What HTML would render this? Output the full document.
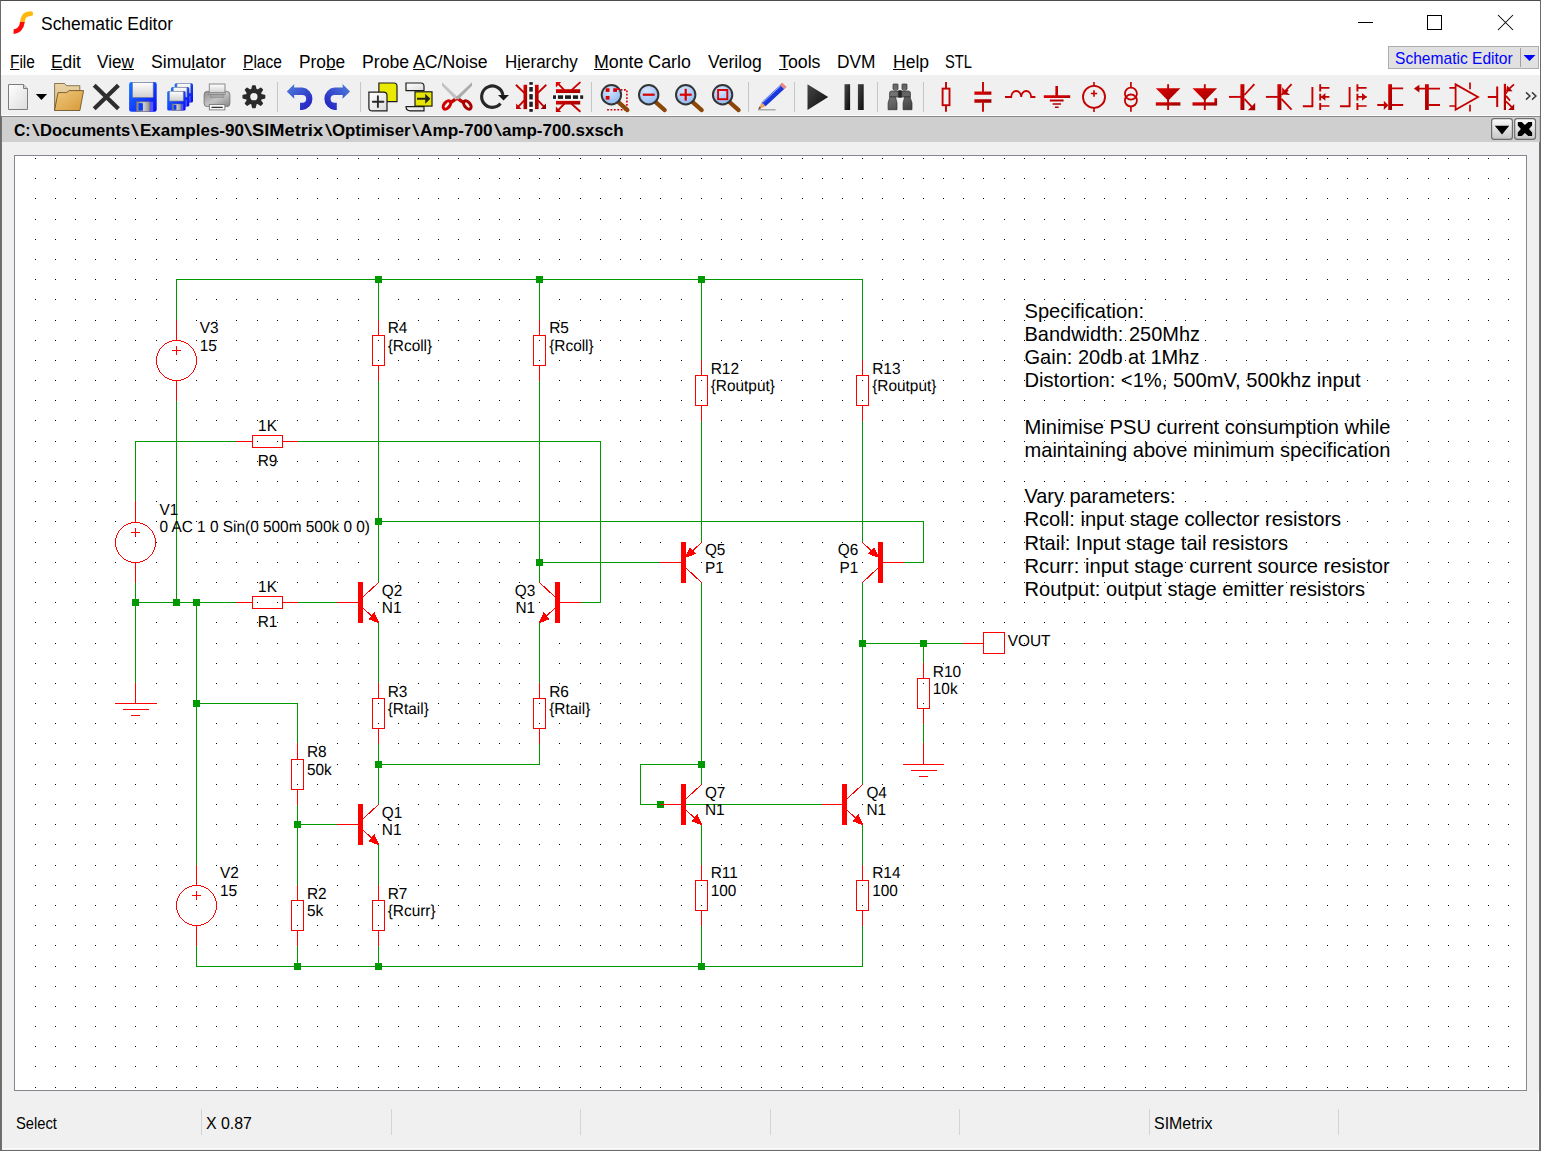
<!DOCTYPE html>
<html><head><meta charset="utf-8"><title>Schematic Editor</title>
<style>
html,body{margin:0;padding:0}
body{width:1541px;height:1151px;position:relative;overflow:hidden;background:#f0f0f0;font-family:"Liberation Sans",sans-serif;color:#000}
.t{position:absolute;white-space:nowrap;transform-origin:0 0;display:block}
.t u{text-decoration-thickness:1px;text-underline-offset:1px}
#top{position:absolute;left:0;top:0;width:1541px;height:75px;background:#fff}
#cv{position:absolute;left:14px;top:155px;width:1511px;height:934px;background:#fff;border:1px solid #828790}
#frame{position:absolute;left:0;top:0;width:1539px;height:1149px;border:1px solid #6b6b6b;border-top-color:#4c4c4c}
#inner{position:absolute;left:1px;top:116px;width:1538px;height:1033px;border:1px solid #707070;border-top-color:#8a8a8a;border-right:none}
#innr{position:absolute;left:1539px;top:142px;width:1px;height:1008px;background:#707070}
#innr2{position:absolute;left:1539px;top:117px;width:1px;height:25px;background:#b8b8b8}
svg text{font-family:"Liberation Sans",sans-serif;font-size:16.02px;fill:#000}
svg text.l{text-rendering:geometricPrecision}
</style></head><body>
<div id="top"></div>
<div id="cv"></div>
<span class="t" style="left:40.6px;top:14.1px;font-size:17.6px;line-height:20.22px;transform:scaleX(0.9922);">Schematic Editor</span>
<span class="t" style="left:9.6px;top:51.9px;font-size:17.6px;line-height:20.22px;transform:scaleX(0.8780);"><u>F</u>ile</span>
<span class="t" style="left:51.1px;top:51.9px;font-size:17.6px;line-height:20.22px;transform:scaleX(0.9859);"><u>E</u>dit</span>
<span class="t" style="left:97.3px;top:51.9px;font-size:17.6px;line-height:20.22px;transform:scaleX(0.9754);">Vie<u>w</u></span>
<span class="t" style="left:150.5px;top:51.9px;font-size:17.6px;line-height:20.22px;transform:scaleX(1.0062);">Simu<u>l</u>ator</span>
<span class="t" style="left:242.7px;top:51.9px;font-size:17.6px;line-height:20.22px;transform:scaleX(0.8835);"><u>P</u>lace</span>
<span class="t" style="left:298.5px;top:51.9px;font-size:17.6px;line-height:20.22px;transform:scaleX(0.9837);">Pro<u>b</u>e</span>
<span class="t" style="left:361.6px;top:51.9px;font-size:17.6px;line-height:20.22px;transform:scaleX(1.0030);">Probe <u>A</u>C/Noise</span>
<span class="t" style="left:505.1px;top:51.9px;font-size:17.6px;line-height:20.22px;transform:scaleX(0.9653);">H<u>i</u>erarchy</span>
<span class="t" style="left:594.1px;top:51.9px;font-size:17.6px;line-height:20.22px;transform:scaleX(1.0108);"><u>M</u>onte Carlo</span>
<span class="t" style="left:708.4px;top:51.9px;font-size:17.6px;line-height:20.22px;transform:scaleX(0.9978);">Verilog</span>
<span class="t" style="left:778.5px;top:51.9px;font-size:17.6px;line-height:20.22px;transform:scaleX(1.0100);"><u>T</u>ools</span>
<span class="t" style="left:836.5px;top:51.9px;font-size:17.6px;line-height:20.22px;transform:scaleX(0.9844);">DVM</span>
<span class="t" style="left:892.5px;top:51.9px;font-size:17.6px;line-height:20.22px;transform:scaleX(0.9945);"><u>H</u>elp</span>
<span class="t" style="left:945.0px;top:51.9px;font-size:17.6px;line-height:20.22px;transform:scaleX(0.8364);">STL</span>
<div style="position:absolute;left:1388px;top:46px;width:149px;height:21px;background:#e1e1e1;border:1px solid #adadad;box-sizing:content-box"></div>
<div style="position:absolute;left:1520px;top:48px;width:1px;height:19px;background:#a0a0a0"></div>
<span class="t" style="left:1395.2px;top:49.3px;font-size:16.2px;line-height:18.61px;transform:scaleX(0.9620);color:#0000ff;">Schematic Editor</span>
<svg style="position:absolute;left:1523px;top:54px" width="13" height="8"><path d="M.5 1h12l-6 6z" fill="#0000ff"/></svg>
<div style="position:absolute;left:2px;top:115px;width:1537px;height:1px;background:#fff"></div>
<div style="position:absolute;left:2px;top:117px;width:1537px;height:25px;background:#cfcfcf"></div>
<span class="t" style="left:13.6px;top:120.8px;font-size:16.4px;line-height:18.84px;transform:scaleX(0.9592);font-weight:bold;">C:</span>
<span class="t" style="left:32.0px;top:120.8px;font-size:16.4px;line-height:18.84px;transform:scaleX(1.6681);">\</span>
<span class="t" style="left:40.2px;top:120.8px;font-size:16.4px;line-height:18.84px;transform:scaleX(1.0100);font-weight:bold;">Documents</span>
<span class="t" style="left:131.0px;top:120.8px;font-size:16.4px;line-height:18.84px;transform:scaleX(1.7120);">\</span>
<span class="t" style="left:139.8px;top:120.8px;font-size:16.4px;line-height:18.84px;transform:scaleX(1.0370);font-weight:bold;">Examples-90</span>
<span class="t" style="left:244.1px;top:120.8px;font-size:16.4px;line-height:18.84px;transform:scaleX(1.7778);">\</span>
<span class="t" style="left:252.4px;top:120.8px;font-size:16.4px;line-height:18.84px;transform:scaleX(1.1144);font-weight:bold;">SIMetrix</span>
<span class="t" style="left:324.6px;top:120.8px;font-size:16.4px;line-height:18.84px;transform:scaleX(1.5803);">\</span>
<span class="t" style="left:332.2px;top:120.8px;font-size:16.4px;line-height:18.84px;transform:scaleX(1.0267);font-weight:bold;">Optimiser</span>
<span class="t" style="left:412.4px;top:120.8px;font-size:16.4px;line-height:18.84px;transform:scaleX(1.5803);">\</span>
<span class="t" style="left:420.0px;top:120.8px;font-size:16.4px;line-height:18.84px;transform:scaleX(1.0481);font-weight:bold;">Amp-700</span>
<span class="t" style="left:493.7px;top:120.8px;font-size:16.4px;line-height:18.84px;transform:scaleX(1.7339);">\</span>
<span class="t" style="left:502.3px;top:120.8px;font-size:16.4px;line-height:18.84px;transform:scaleX(1.0348);font-weight:bold;">amp-700.sxsch</span>
<div style="position:absolute;left:201px;top:1109px;width:1px;height:26px;background:#d4d4d4"></div>
<div style="position:absolute;left:391px;top:1109px;width:1px;height:26px;background:#d4d4d4"></div>
<div style="position:absolute;left:580px;top:1109px;width:1px;height:26px;background:#d4d4d4"></div>
<div style="position:absolute;left:770px;top:1109px;width:1px;height:26px;background:#d4d4d4"></div>
<div style="position:absolute;left:959px;top:1109px;width:1px;height:26px;background:#d4d4d4"></div>
<div style="position:absolute;left:1149px;top:1109px;width:1px;height:26px;background:#d4d4d4"></div>
<div style="position:absolute;left:1338px;top:1109px;width:1px;height:26px;background:#d4d4d4"></div>
<span class="t" style="left:16.4px;top:1113.9px;font-size:16.2px;line-height:18.61px;transform:scaleX(0.9106);">Select</span>
<span class="t" style="left:205.8px;top:1113.9px;font-size:16.2px;line-height:18.61px;transform:scaleX(0.9821);">X 0.87</span>
<span class="t" style="left:1153.5px;top:1113.9px;font-size:16.2px;line-height:18.61px;transform:scaleX(0.9847);">SIMetrix</span>
<svg id="tb" style="position:absolute;left:0;top:0" width="1541" height="155" viewBox="0 0 1541 155">
<defs>
<linearGradient id="gdoc" x1="0" y1="0" x2="1" y2="1"><stop offset="0" stop-color="#fff"/><stop offset="1" stop-color="#dcdcdc"/></linearGradient>
<linearGradient id="gfb" x1="0" y1="0" x2="0" y2="1"><stop offset="0" stop-color="#ead3a6"/><stop offset="1" stop-color="#d9b77a"/></linearGradient>
<linearGradient id="gff" x1="0" y1="0" x2="1" y2="1"><stop offset="0" stop-color="#efc981"/><stop offset="1" stop-color="#d79a36"/></linearGradient>
<linearGradient id="gbl" x1="0" y1="0" x2="1" y2="1"><stop offset="0" stop-color="#1478ff"/><stop offset=".45" stop-color="#1448ff"/><stop offset="1" stop-color="#0808e8"/></linearGradient>
<linearGradient id="ggr" x1="0" y1="0" x2="1" y2="0"><stop offset="0" stop-color="#7c7c7c"/><stop offset=".55" stop-color="#d0d0d0"/><stop offset="1" stop-color="#8e8e8e"/></linearGradient>
<linearGradient id="gwh" x1="0" y1="0" x2="0" y2="1"><stop offset="0" stop-color="#fff"/><stop offset="1" stop-color="#d0d0d0"/></linearGradient>
<linearGradient id="gun" x1="0" y1="0" x2="1" y2="1"><stop offset="0" stop-color="#5082dc"/><stop offset="1" stop-color="#2018c0"/></linearGradient>
<linearGradient id="gpr" x1="0" y1="0" x2="1" y2="1"><stop offset="0" stop-color="#8e8e8e"/><stop offset=".5" stop-color="#c4c4c4"/><stop offset="1" stop-color="#868686"/></linearGradient>
<radialGradient id="glens" cx=".4" cy=".3" r=".75"><stop offset="0" stop-color="#d4e6ff"/><stop offset="1" stop-color="#8fb8f2"/></radialGradient>
<linearGradient id="gpen" x1="0" y1="0" x2="1" y2="1"><stop offset="0" stop-color="#6a8cff"/><stop offset=".5" stop-color="#1a3ae0"/><stop offset="1" stop-color="#0a1aa0"/></linearGradient>
<linearGradient id="gplay" x1="0" y1="0" x2="1" y2="1"><stop offset="0" stop-color="#484848"/><stop offset="1" stop-color="#0a0a0a"/></linearGradient>
<linearGradient id="gbin" x1="0" y1="0" x2=".3" y2="1"><stop offset="0" stop-color="#767676"/><stop offset="1" stop-color="#585858"/></linearGradient><linearGradient id="gbin2" x1="0" y1="0" x2=".3" y2="1"><stop offset="0" stop-color="#666"/><stop offset="1" stop-color="#444"/></linearGradient>
<linearGradient id="gred" x1="0" y1="0" x2="1" y2="1"><stop offset="0" stop-color="#e00000"/><stop offset="1" stop-color="#960000"/></linearGradient>
<linearGradient id="gbtn" x1="0" y1="0" x2="0" y2="1"><stop offset="0" stop-color="#fcfcfc"/><stop offset="1" stop-color="#c6c6c6"/></linearGradient>
</defs>
<clipPath id="cpo"><rect x="0" y="0" width="60" height="22"/></clipPath><clipPath id="cpr"><rect x="13.6" y="22" width="60" height="22"/></clipPath>
<path d="M30.8 13.7C23.5 13.7 23 18.5 22.4 22C21.8 27 20 32 10 32.1" fill="none" stroke="#ffb90c" stroke-width="4.7" stroke-linecap="round" clip-path="url(#cpo)"/>
<path d="M30.8 13.7C23.5 13.7 23 18.5 22.4 22C21.8 27 20 32 10 32.1" fill="none" stroke="#ff0a0a" stroke-width="4.7" clip-path="url(#cpr)"/>
<path d="M1358 22.5h15" stroke="#000" stroke-width="1" fill="none"/>
<rect x="1427.5" y="15.5" width="14" height="14" fill="none" stroke="#000" stroke-width="1"/>
<path d="M1498 15l15 15M1513 15l-15 15" stroke="#000" stroke-width="1.05" fill="none"/>
<rect x="277" y="82" width="1" height="30" fill="#c6c6c6"/>
<rect x="360" y="82" width="1" height="30" fill="#c6c6c6"/>
<rect x="591" y="82" width="1" height="30" fill="#c6c6c6"/>
<rect x="748" y="82" width="1" height="30" fill="#c6c6c6"/>
<rect x="794" y="82" width="1" height="30" fill="#c6c6c6"/>
<rect x="877" y="82" width="1" height="30" fill="#c6c6c6"/>
<rect x="923" y="82" width="1" height="30" fill="#c6c6c6"/>
<path d="M8.5 84.5H23.5L27.5 88.5V109.5H8.5z" fill="url(#gdoc)" stroke="#7c7c7c"/>
<path d="M23.5 84.5V88.5H27.5" fill="#d4d4d4" stroke="#7c7c7c"/>
<path d="M35.8 93.9h11.3l-5.65 6.2z" fill="#000"/>
<path d="M54.6 110.4V83.5H64.5L66.4 85.7H79.8V91" fill="url(#gfb)" stroke="#6e5a34" stroke-width=".8"/>
<path d="M54.5 110.5L58 92.6H66.4L69.2 90.6H83.6L79.9 110.5z" fill="url(#gff)" stroke="#5e4822" stroke-width=".8"/>
<path d="M94.2 85.2l24.2 23.6M118.4 85.2L94.2 108.8" stroke="#2e2e2e" stroke-width="4.2" fill="none"/>
<rect x="129.1" y="82.0" width="27.6" height="29.8" rx="2.4" fill="url(#gbl)"/>
<rect x="132.7" y="82.5" width="20.4" height="14.8" fill="url(#gwh)" stroke="#8a8a90" stroke-width=".6"/>
<rect x="136.4" y="101.8" width="13.4" height="9.8" fill="url(#ggr)" stroke="#77746a" stroke-width=".5"/>
<rect x="150.0" y="101.8" width="3.2" height="9.8" fill="#5656ff"/>
<rect x="138.5" y="103.2" width="4.4" height="7.4" fill="#0a3cf6"/>
<rect x="174.6" y="83.2" width="18.4" height="19.4" rx="1.6" fill="url(#gbl)"/>
<rect x="177.0" y="83.5" width="13.6" height="9.6" fill="url(#gwh)" stroke="#8a8a90" stroke-width=".6"/>
<rect x="179.5" y="96.1" width="8.9" height="6.4" fill="url(#ggr)" stroke="#77746a" stroke-width=".5"/>
<rect x="188.5" y="96.1" width="2.1" height="6.4" fill="#5656ff"/>
<rect x="180.9" y="97.0" width="2.9" height="4.8" fill="#0a3cf6"/>
<rect x="170.9" y="87.1" width="18.4" height="19.4" rx="1.6" fill="url(#gbl)"/>
<rect x="173.3" y="87.4" width="13.6" height="9.6" fill="url(#gwh)" stroke="#8a8a90" stroke-width=".6"/>
<rect x="175.8" y="100.0" width="8.9" height="6.4" fill="url(#ggr)" stroke="#77746a" stroke-width=".5"/>
<rect x="184.8" y="100.0" width="2.1" height="6.4" fill="#5656ff"/>
<rect x="177.2" y="100.9" width="2.9" height="4.8" fill="#0a3cf6"/>
<rect x="167.2" y="91.0" width="18.4" height="19.6" rx="1.6" fill="url(#gbl)"/>
<rect x="169.6" y="91.3" width="13.6" height="9.7" fill="url(#gwh)" stroke="#8a8a90" stroke-width=".6"/>
<rect x="172.1" y="104.0" width="8.9" height="6.4" fill="url(#ggr)" stroke="#77746a" stroke-width=".5"/>
<rect x="181.1" y="104.0" width="2.1" height="6.4" fill="#5656ff"/>
<rect x="173.5" y="104.9" width="2.9" height="4.9" fill="#0a3cf6"/>
<rect x="209.3" y="84.1" width="15.6" height="9.4" fill="url(#gwh)" stroke="#8c8c8c" stroke-width=".8"/>
<rect x="204.1" y="91.4" width="25.8" height="15.2" rx="3.2" fill="url(#gpr)" stroke="#6e6e6e" stroke-width=".8"/><rect x="209.3" y="84.1" width="15.6" height="8.6" fill="url(#gwh)" stroke="#8c8c8c" stroke-width=".8"/>
<rect x="208.6" y="92.8" width="17" height="1.6" fill="#b8b8b8" stroke="#7a7a7a" stroke-width=".5"/><rect x="210.2" y="94.6" width="13.8" height="2.6" fill="#a8a8a8" stroke="#777" stroke-width=".5"/>
<rect x="209.3" y="104.6" width="15.6" height="5.3" fill="#f6f6f6" stroke="#6e6e6e" stroke-width=".8"/>
<rect x="211.4" y="106.8" width="11.4" height="1.2" rx=".6" fill="#333"/>
<path d="M261.0 94.8L264.5 95.6L264.5 97.8L261.0 98.6L260.2 100.4L262.2 103.5L260.7 105.0L257.6 103.0L255.8 103.8L255.0 107.3L252.8 107.3L252.0 103.8L250.2 103.0L247.1 105.0L245.6 103.5L247.6 100.4L246.8 98.6L243.3 97.8L243.3 95.6L246.8 94.8L247.6 93.0L245.6 89.9L247.1 88.4L250.2 90.4L252.0 89.6L252.8 86.1L255.0 86.1L255.8 89.6L257.6 90.4L260.7 88.4L262.2 89.9L260.2 93.0zM258.4 96.7a4.5 4.5 0 1 0 -9.0 0a4.5 4.5 0 1 0 9.0 0z" fill="#2a2a2a" fill-rule="evenodd" stroke="#2a2a2a" stroke-width="1.7" stroke-linejoin="round"/>
<path d="M286.75 91.5L294.3 84L294 87.6H302.3A11.2 11.2 0 0 1 302.3 109.9H300V102.7H302.3A3.9 3.9 0 0 0 302.3 94.9H294L294.3 98.8z" fill="url(#gun)"/>
<g transform="translate(636.8 0) scale(-1 1)"><path d="M286.75 91.5L294.3 84L294 87.6H302.3A11.2 11.2 0 0 1 302.3 109.9H300V102.7H302.3A3.9 3.9 0 0 0 302.3 94.9H294L294.3 98.8z" fill="url(#gun)"/></g>
<path d="M378.9 83H394Q397 83 397 86.2V101.7H378.9z" fill="#eaea00" stroke="#1c1c1c" stroke-width="1.2"/>
<path d="M368.9 92.2H383.6Q387 92.2 387 95.6V110.9H372.4Q368.9 110.9 368.9 107.4z" fill="url(#gdoc)" stroke="#1c1c1c" stroke-width="1.2"/>
<path d="M372.8 101.7h10.6M377.9 96.2v10.9" stroke="#2a2a2a" stroke-width="1.9" stroke-linecap="round" fill="none"/>
<path d="M406 83H421Q424 83 424 86.2V90.6H406z" fill="url(#gdoc)" stroke="#1c1c1c" stroke-width="1.2"/>
<path d="M406 106.6H424V110.9H410.4Q406 110.9 406 106.6z" fill="url(#gdoc)" stroke="#1c1c1c" stroke-width="1.2"/>
<rect x="415" y="91.8" width="17" height="14.3" fill="#e6e600" stroke="#1c1c1c" stroke-width="1.2"/>
<path d="M417 97.7h8.2v-3.9l5.2 4.9-5.2 5.1v-4.1h-8.2z" fill="#222"/>
<path d="M450.6 102.6L457.6 97.6M463.6 102.6L456.2 97.6" stroke="#c40000" stroke-width="3.4" fill="none"/>
<ellipse cx="446.9" cy="105" rx="4.75" ry="2.85" transform="rotate(-51 446.9 105)" fill="none" stroke="#d00000" stroke-width="3.1"/>
<ellipse cx="467.4" cy="105" rx="4.75" ry="2.85" transform="rotate(51 467.4 105)" fill="none" stroke="#a80000" stroke-width="3.1"/>
<path d="M442 82.2V85.8L455.6 99.8L458.4 97.8z" fill="#c2c2c2"/><path d="M472 82.2V85.8L458.2 99.8L455.4 97.8z" fill="#ababab"/>
<path d="M500.5 103.6A10.7 10.7 0 1 1 502.9 94.9" fill="none" stroke="#262626" stroke-width="3.1"/>
<path d="M498 94.9H509L503.5 100.5z" fill="#1a1a1a"/>
<rect x="528.6" y="81.6" width="4.9" height="30.6" fill="#fff" opacity=".85"/>
<rect x="529.3" y="82.1" width="3.5" height="2.7" fill="#1e1e1e"/>
<rect x="529.3" y="87" width="3.5" height="4.6" fill="#1e1e1e"/>
<rect x="529.3" y="94.1" width="3.5" height="5.4" fill="#1e1e1e"/>
<rect x="529.3" y="101.7" width="3.5" height="5.2" fill="#1e1e1e"/>
<rect x="529.3" y="109" width="3.5" height="2.8" fill="#1e1e1e"/>
<rect x="523.5" y="84.8" width="3.6" height="24.3" fill="url(#gred)"/><rect x="535" y="84.8" width="3.6" height="24.3" fill="url(#gred)"/>
<path d="M516.4 85.3L524 92.6M524 100.7L517.6 107.4M545.8 85.3L538.2 92.6M538.2 100.7L544.6 107.4" stroke="#c40000" stroke-width="1.9" stroke-linecap="round" fill="none"/>
<path d="M516.1 103.6V109.1H521.5z" fill="#c40000"/><path d="M546 103.6V109.1H540.6z" fill="#900000"/>
<rect x="552.4" y="94.6" width="31.4" height="5" fill="#fff" opacity=".85"/>
<rect x="553" y="95.3" width="3.0" height="3.6" fill="#1e1e1e"/>
<rect x="557.9" y="95.3" width="5.2" height="3.6" fill="#1e1e1e"/>
<rect x="565" y="95.3" width="6.0" height="3.6" fill="#1e1e1e"/>
<rect x="572.9" y="95.3" width="5.2" height="3.6" fill="#1e1e1e"/>
<rect x="580.2" y="95.3" width="3.0" height="3.6" fill="#1e1e1e"/>
<rect x="556" y="89.2" width="24.2" height="3.8" fill="url(#gred)"/><rect x="556" y="100.9" width="24.2" height="3.6" fill="url(#gred)"/>
<path d="M564.1 89.9L558 83.6M571.8 89.9L579.8 82.6M564.1 104L558 110.4M571.8 104L579.8 111.3" stroke="#c40000" stroke-width="1.9" stroke-linecap="round" fill="none"/>
<path d="M555.9 82.1H561.2L555.9 87.4z" fill="#e40000"/><path d="M555.9 111.9H561.2L555.9 106.6z" fill="#c40000"/>
<path d="M620.6 89.9H626.9V109.8H607" stroke="#d00000" stroke-width="1.6" stroke-dasharray="1.8 1.6" fill="none"/>
<path d="M618.4 102.1L627.4 110.1" stroke="#8a4708" stroke-width="4.2" stroke-linecap="round" fill="none"/>
<circle cx="611.4" cy="94.7" r="9.7" fill="url(#glens)" stroke="#343434" stroke-width="2"/>
<rect x="605.7" y="88.3" width="3.8" height="3.6" fill="#d80000"/><rect x="613.2" y="88.3" width="3.8" height="3.6" fill="#d80000"/><rect x="605.7" y="96" width="3.8" height="3.6" fill="#d80000"/>
<path d="M617 89.2h3" stroke="#d80000" stroke-width="1.4"/>
<path d="M655.7 102.1L664.7 110.1" stroke="#8a4708" stroke-width="4.2" stroke-linecap="round" fill="none"/>
<circle cx="648.7" cy="94.7" r="9.7" fill="url(#glens)" stroke="#343434" stroke-width="2"/>
<rect x="642.8" y="93.6" width="11.9" height="2.2" fill="#d80000"/>
<path d="M692.7 102.1L701.7 110.1" stroke="#8a4708" stroke-width="4.2" stroke-linecap="round" fill="none"/>
<circle cx="685.7" cy="94.7" r="9.7" fill="url(#glens)" stroke="#343434" stroke-width="2"/>
<rect x="679.8" y="93.6" width="11.9" height="2.2" fill="#d80000"/><rect x="684.6" y="88.8" width="2.2" height="11.9" fill="#d80000"/>
<path d="M729.6 102.1L738.6 110.1" stroke="#8a4708" stroke-width="4.2" stroke-linecap="round" fill="none"/>
<circle cx="722.6" cy="94.7" r="9.7" fill="url(#glens)" stroke="#343434" stroke-width="2"/>
<rect x="718.1" y="90" width="9.2" height="9.2" fill="none" stroke="#d80000" stroke-width="1.9"/>
<path d="M758 109.8h17.6" stroke="#9a9a9a" stroke-width="1.2"/>
<path d="M758.3 109.3L761.6 102.4L765.6 106.2z" fill="#e6a660"/>
<path d="M758.3 109.3L759.6 106.6L761.2 108.1z" fill="#5a3a1a"/>
<path d="M761.6 102.4L780.2 84.9L784.2 88.9L765.6 106.2z" fill="url(#gpen)"/>
<path d="M762.6 102.6L780.4 85.9" stroke="#b8c8ff" stroke-width=".9" fill="none"/>
<path d="M780.2 84.9L782.2 83L786.2 87L784.2 88.9z" fill="#f08a8a" stroke="#c06060" stroke-width=".5"/>
<path d="M807.5 84.2L828.2 97L807.5 110z" fill="url(#gplay)"/>
<rect x="844.5" y="84.2" width="5.6" height="25.8" fill="url(#gplay)"/><rect x="857.9" y="84.2" width="5.8" height="25.8" fill="url(#gplay)"/>
<rect x="893" y="84" width="5" height="5.6" rx=".6" fill="#6c6c6c" stroke="#2e2e2e" stroke-width=".7"/><rect x="902" y="84" width="5" height="5.6" rx=".6" fill="#666" stroke="#2e2e2e" stroke-width=".7"/>
<rect x="894.5" y="89.4" width="2.3" height="1.8" fill="#8a8a8a"/><rect x="903.2" y="89.4" width="2.3" height="1.8" fill="#8a8a8a"/>
<path d="M889.6 97V92.6Q889.8 91 891.6 91H898.3V97z" fill="#727272" stroke="#2e2e2e" stroke-width=".7"/><path d="M910.4 97V92.6Q910.2 91 908.4 91H901.6V97z" fill="#646464" stroke="#2e2e2e" stroke-width=".7"/>
<path d="M889.9 97H895.5L897 103V109.7H888.1V103z" fill="url(#gbin)" stroke="#2e2e2e" stroke-width=".7"/><path d="M904.6 97H910L912 103V109.7H903.1V103z" fill="url(#gbin2)" stroke="#2e2e2e" stroke-width=".7"/>
<rect x="898.2" y="90.2" width="3.6" height="7.6" rx=".6" fill="#262626"/>
<path d="M946 82v6M946 105.5v6.3" stroke="#c40000" stroke-width="1.9" fill="none"/>
<rect x="942.6" y="88.6" width="6.9" height="16.6" fill="none" stroke="#c40000" stroke-width="1.9"/>
<path d="M983 82v10M983 102.5v9.3" stroke="#c40000" stroke-width="1.9" fill="none"/>
<path d="M974.4 91.4h17v3.3h-17zM974.4 99.3h17v3.4h-17z" fill="url(#gred)"/>
<path d="M1005 97h6.2a5 6 0 0 1 10 0a5 6 0 0 1 10 0h4.2" stroke="#c40000" stroke-width="1.8" fill="none"/>
<path d="M1056.7 86v10" stroke="#c40000" stroke-width="2.6" fill="none"/>
<path d="M1043.8 95.2h26.4v2.8h-26.4zM1049.8 99.6h13.8v1.8h-13.8zM1052.6 103.2h8.4v1.6h-8.4zM1055 106.6h3.6v1.5h-3.6z" fill="url(#gred)"/>
<path d="M1094 82v4M1094 108v4M1090.8 93.5h6.4M1094 90.3v6.4" stroke="#c40000" stroke-width="1.6" fill="none"/>
<circle cx="1094" cy="96.9" r="11" fill="none" stroke="#c40000" stroke-width="1.9"/>
<path d="M1130.9 82v5.5M1130.9 106.6v5.2" stroke="#c40000" stroke-width="1.7" fill="none"/>
<circle cx="1130.9" cy="93.7" r="6" fill="none" stroke="#c40000" stroke-width="1.8"/><circle cx="1130.9" cy="100.5" r="6" fill="none" stroke="#c40000" stroke-width="1.8"/>
<path d="M1168.1 84.2v25.8" stroke="#c40000" stroke-width="1.9" fill="none"/>
<path d="M1155.8 88.2h24.6L1168.1 100.8z" fill="url(#gred)"/>
<path d="M1155.8 102.3h24.6v3.3h-24.6z" fill="url(#gred)"/>
<path d="M1204.8 84.2v25.8" stroke="#c40000" stroke-width="1.9" fill="none"/>
<path d="M1192.5 88.2h24.6L1204.8 100.8z" fill="url(#gred)"/>
<path d="M1192.5 102.3h24.6v3.3h-24.6z" fill="url(#gred)"/>
<path d="M1214.4 98.2h2.7v5h-2.7z" fill="url(#gred)"/>
<path d="M1229 96.9h12" stroke="#c40000" stroke-width="1.9" fill="none"/>
<path d="M1240.4 84.2h4v25.8h-4z" fill="url(#gred)"/>
<path d="M1244.4 95L1254.4 84.2M1244.4 98.8L1252.5 107.6" stroke="#c40000" stroke-width="1.8" fill="none"/>
<path d="M1255.2 110.2h-7.4l7.4-7.4z" fill="url(#gred)"/>
<path d="M1265.9 96.9h12" stroke="#c40000" stroke-width="1.9" fill="none"/>
<path d="M1277.4 84.2h4v25.8h-4z" fill="url(#gred)"/>
<path d="M1281.4 95L1291.6 84.2M1281.4 98.8L1291.6 109.6" stroke="#c40000" stroke-width="1.8" fill="none"/>
<path d="M1282.2 94.4v-7.2l3 3.2 1.6-1.6 1.8 1.8-1.6 1.6 3 2.8z" fill="url(#gred)"/>
<path d="M1302.8 106.3h9.6V86.9" stroke="#c40000" stroke-width="1.9" fill="none"/>
<path d="M1320.2 84.2v7.2M1320.2 93.8v6.7M1320.2 102.9v7.1" stroke="#c40000" stroke-width="1.9" fill="none"/>
<path d="M1320.2 87.8h9.2M1320.2 96.9h9.2M1320.2 106h9.2" stroke="#c40000" stroke-width="1.7" fill="none"/>
<path d="M1320.8 96.9l4.6-3.9v7.8z" fill="url(#gred)"/>
<path d="M1340.0 106.3h9.6V86.9" stroke="#c40000" stroke-width="1.9" fill="none"/>
<path d="M1357.4 84.2v7.2M1357.4 93.8v6.7M1357.4 102.9v7.1" stroke="#c40000" stroke-width="1.9" fill="none"/>
<path d="M1357.4 87.8h9.2M1357.4 96.9h9.2M1357.4 106h9.2" stroke="#c40000" stroke-width="1.7" fill="none"/>
<path d="M1366.8 96.9l-4.8-3.9v7.8z" fill="url(#gred)"/>
<path d="M1388.2 84.2h3.8v25.8h-3.8z" fill="url(#gred)"/>
<path d="M1392 88.4h11.2M1392 105h11.2M1377.3 105h8" stroke="#c40000" stroke-width="1.8" fill="none"/>
<path d="M1388.4 105.3l-4.6-4.6v9.2z" fill="url(#gred)"/>
<path d="M1425 84.2h3.8v25.8h-3.8z" fill="url(#gred)"/>
<path d="M1418 88.6h22M1428.8 105h11.2" stroke="#c40000" stroke-width="1.8" fill="none"/>
<path d="M1413.8 88.6l5.6-3.8v7.6z" fill="url(#gred)"/>
<path d="M1455.6 84.4L1478 97L1455.6 109.8z" stroke="#c40000" stroke-width="1.8" fill="none"/>
<path d="M1449.4 87.8h6.2M1449.4 106h6.2M1470 82.6v6.6M1470 104.8v6.6" stroke="#c40000" stroke-width="1.7" fill="none"/>
<path d="M1487.8 96.9h9.4M1497.2 86.4v20.6" stroke="#c40000" stroke-width="2" fill="none"/>
<path d="M1503.8 83.8h2.2v26.2h-2.2z" fill="url(#gred)"/>
<path d="M1514 84.4L1508.2 89.6M1506 95.9L1510 100.6M1506 101.4L1512.4 107.6" stroke="#c40000" stroke-width="1.8" fill="none"/>
<path d="M1507.1 85.6L1512.6 91.2L1506 91.6z" fill="url(#gred)"/>
<path d="M1508 91.2Q1506.2 92.2 1506 94" stroke="#c40000" stroke-width="1.4" fill="none"/>
<path d="M1514.2 104.1V110H1508.1z" fill="url(#gred)"/>
<path d="M1526 92.4l3.9 3.6-3.9 3.6M1532 92.4l3.9 3.6-3.9 3.6" stroke="#3c3c3c" stroke-width="1.5" fill="none"/>
<rect x="1491.6" y="118.7" width="20.8" height="20.6" rx="2.6" fill="url(#gbtn)" stroke="#6e6e6e" stroke-width="1.2"/>
<rect x="1514.7" y="118.7" width="20.8" height="20.6" rx="2.6" fill="url(#gbtn)" stroke="#6e6e6e" stroke-width="1.2"/>
<path d="M1494.8 125.8h14.4l-7.2 8.8z" fill="#000"/>
<path d="M1517.8 121.9H1521.7L1524.9 125L1528.3 121.9H1532.1V125.4L1529 128.9L1532.1 132.4V135.9H1528.3L1524.9 133L1521.7 135.9H1517.8V132.4L1520.9 128.9L1517.8 125.4z" fill="#000"/>
</svg>
<svg id="sch" style="position:absolute;left:0;top:0" width="1541" height="1151" viewBox="0 0 1541 1151" shape-rendering="crispEdges">
<defs><path id="gr" d="M35 .5h1m19 0h1m19 0h1m19 0h1m19 0h1m19 0h1m20 0h1m19 0h1m19 0h1m19 0h1m19 0h1m20 0h1m19 0h1m19 0h1m19 0h1m19 0h1m20 0h1m19 0h1m19 0h1m19 0h1m19 0h1m19 0h1m20 0h1m19 0h1m19 0h1m19 0h1m19 0h1m20 0h1m19 0h1m19 0h1m19 0h1m19 0h1m20 0h1m19 0h1m19 0h1m19 0h1m19 0h1m19 0h1m20 0h1m19 0h1m19 0h1m19 0h1m19 0h1m20 0h1m19 0h1m19 0h1m19 0h1m19 0h1m20 0h1m19 0h1m19 0h1m19 0h1m19 0h1m19 0h1m20 0h1m19 0h1m19 0h1m19 0h1m19 0h1m20 0h1m19 0h1m19 0h1m19 0h1m19 0h1m20 0h1m19 0h1m19 0h1m19 0h1m19 0h1m20 0h1m19 0h1m19 0h1m19 0h1m19 0h1" stroke="#000" stroke-width="1" fill="none"/></defs><use href="#gr" y="158"/><use href="#gr" y="178"/><use href="#gr" y="198"/><use href="#gr" y="219"/><use href="#gr" y="239"/><use href="#gr" y="259"/><use href="#gr" y="279"/><use href="#gr" y="299"/><use href="#gr" y="320"/><use href="#gr" y="340"/><use href="#gr" y="360"/><use href="#gr" y="380"/><use href="#gr" y="400"/><use href="#gr" y="420"/><use href="#gr" y="441"/><use href="#gr" y="461"/><use href="#gr" y="481"/><use href="#gr" y="501"/><use href="#gr" y="521"/><use href="#gr" y="542"/><use href="#gr" y="562"/><use href="#gr" y="582"/><use href="#gr" y="602"/><use href="#gr" y="622"/><use href="#gr" y="643"/><use href="#gr" y="663"/><use href="#gr" y="683"/><use href="#gr" y="703"/><use href="#gr" y="723"/><use href="#gr" y="743"/><use href="#gr" y="764"/><use href="#gr" y="784"/><use href="#gr" y="804"/><use href="#gr" y="824"/><use href="#gr" y="844"/><use href="#gr" y="865"/><use href="#gr" y="885"/><use href="#gr" y="905"/><use href="#gr" y="925"/><use href="#gr" y="945"/><use href="#gr" y="966"/><use href="#gr" y="986"/><use href="#gr" y="1006"/><use href="#gr" y="1026"/><use href="#gr" y="1046"/><use href="#gr" y="1066"/><use href="#gr" y="1087"/>
<rect x="176" y="279" width="687" height="1" fill="#009900"/>
<rect x="176" y="279" width="1" height="42" fill="#009900"/>
<rect x="176" y="400" width="1" height="203" fill="#009900"/>
<rect x="378" y="279" width="1" height="42" fill="#009900"/>
<rect x="378" y="380" width="1" height="203" fill="#009900"/>
<rect x="539" y="279" width="1" height="42" fill="#009900"/>
<rect x="539" y="380" width="1" height="203" fill="#009900"/>
<rect x="701" y="279" width="1" height="82" fill="#009900"/>
<rect x="701" y="420" width="1" height="123" fill="#009900"/>
<rect x="862" y="279" width="1" height="82" fill="#009900"/>
<rect x="862" y="420" width="1" height="123" fill="#009900"/>
<rect x="135" y="441" width="1" height="61" fill="#009900"/>
<rect x="135" y="441" width="102" height="1" fill="#009900"/>
<rect x="297" y="441" width="304" height="1" fill="#009900"/>
<rect x="600" y="441" width="1" height="162" fill="#009900"/>
<rect x="580" y="602" width="21" height="1" fill="#009900"/>
<rect x="135" y="582" width="1" height="102" fill="#009900"/>
<rect x="135" y="602" width="102" height="1" fill="#009900"/>
<rect x="297" y="602" width="41" height="1" fill="#009900"/>
<rect x="196" y="602" width="1" height="264" fill="#009900"/>
<rect x="196" y="945" width="1" height="22" fill="#009900"/>
<rect x="196" y="966" width="667" height="1" fill="#009900"/>
<rect x="196" y="703" width="102" height="1" fill="#009900"/>
<rect x="297" y="703" width="1" height="41" fill="#009900"/>
<rect x="297" y="804" width="1" height="82" fill="#009900"/>
<rect x="297" y="945" width="1" height="22" fill="#009900"/>
<rect x="297" y="824" width="41" height="1" fill="#009900"/>
<rect x="378" y="622" width="1" height="62" fill="#009900"/>
<rect x="378" y="743" width="1" height="62" fill="#009900"/>
<rect x="378" y="844" width="1" height="42" fill="#009900"/>
<rect x="378" y="945" width="1" height="22" fill="#009900"/>
<rect x="378" y="764" width="162" height="1" fill="#009900"/>
<rect x="539" y="743" width="1" height="22" fill="#009900"/>
<rect x="539" y="622" width="1" height="62" fill="#009900"/>
<rect x="378" y="521" width="546" height="1" fill="#009900"/>
<rect x="923" y="521" width="1" height="42" fill="#009900"/>
<rect x="903" y="562" width="21" height="1" fill="#009900"/>
<rect x="539" y="562" width="122" height="1" fill="#009900"/>
<rect x="701" y="582" width="1" height="203" fill="#009900"/>
<rect x="640" y="764" width="62" height="1" fill="#009900"/>
<rect x="640" y="764" width="1" height="41" fill="#009900"/>
<rect x="640" y="804" width="183" height="1" fill="#009900"/>
<rect x="701" y="824" width="1" height="42" fill="#009900"/>
<rect x="701" y="925" width="1" height="42" fill="#009900"/>
<rect x="862" y="582" width="1" height="203" fill="#009900"/>
<rect x="862" y="824" width="1" height="42" fill="#009900"/>
<rect x="862" y="925" width="1" height="42" fill="#009900"/>
<rect x="862" y="643" width="102" height="1" fill="#009900"/>
<rect x="923" y="643" width="1" height="21" fill="#009900"/>
<rect x="923" y="723" width="1" height="21" fill="#009900"/>
<rect x="375" y="276" width="7" height="7" fill="#009900"/>
<rect x="536" y="276" width="7" height="7" fill="#009900"/>
<rect x="698" y="276" width="7" height="7" fill="#009900"/>
<rect x="375" y="518" width="7" height="7" fill="#009900"/>
<rect x="536" y="559" width="7" height="7" fill="#009900"/>
<rect x="132" y="599" width="7" height="7" fill="#009900"/>
<rect x="173" y="599" width="7" height="7" fill="#009900"/>
<rect x="193" y="599" width="7" height="7" fill="#009900"/>
<rect x="193" y="700" width="7" height="7" fill="#009900"/>
<rect x="294" y="821" width="7" height="7" fill="#009900"/>
<rect x="375" y="761" width="7" height="7" fill="#009900"/>
<rect x="294" y="963" width="7" height="7" fill="#009900"/>
<rect x="375" y="963" width="7" height="7" fill="#009900"/>
<rect x="698" y="963" width="7" height="7" fill="#009900"/>
<rect x="698" y="761" width="7" height="7" fill="#009900"/>
<rect x="657" y="801" width="7" height="7" fill="#009900"/>
<rect x="859" y="640" width="7" height="7" fill="#009900"/>
<rect x="920" y="640" width="7" height="7" fill="#009900"/>
<rect x="378" y="320" width="1" height="16" fill="#ff0000"/>
<rect x="378" y="365" width="1" height="16" fill="#ff0000"/>
<rect x="372" y="335" width="13" height="1" fill="#ff0000"/>
<rect x="372" y="365" width="13" height="1" fill="#ff0000"/>
<rect x="372" y="335" width="1" height="31" fill="#ff0000"/>
<rect x="384" y="335" width="1" height="31" fill="#ff0000"/>
<text x="387.7" y="333.0" class="l" textLength="19.7" lengthAdjust="spacingAndGlyphs">R4</text>
<text x="387.7" y="351.0" class="l" textLength="44.5" lengthAdjust="spacingAndGlyphs">{Rcoll}</text>
<rect x="539" y="320" width="1" height="16" fill="#ff0000"/>
<rect x="539" y="365" width="1" height="16" fill="#ff0000"/>
<rect x="533" y="335" width="13" height="1" fill="#ff0000"/>
<rect x="533" y="365" width="13" height="1" fill="#ff0000"/>
<rect x="533" y="335" width="1" height="31" fill="#ff0000"/>
<rect x="545" y="335" width="1" height="31" fill="#ff0000"/>
<text x="549.2" y="333.0" class="l" textLength="19.7" lengthAdjust="spacingAndGlyphs">R5</text>
<text x="549.2" y="351.0" class="l" textLength="44.5" lengthAdjust="spacingAndGlyphs">{Rcoll}</text>
<rect x="701" y="360" width="1" height="16" fill="#ff0000"/>
<rect x="701" y="405" width="1" height="16" fill="#ff0000"/>
<rect x="695" y="375" width="13" height="1" fill="#ff0000"/>
<rect x="695" y="405" width="13" height="1" fill="#ff0000"/>
<rect x="695" y="375" width="1" height="31" fill="#ff0000"/>
<rect x="707" y="375" width="1" height="31" fill="#ff0000"/>
<text x="710.7" y="374.0" class="l" textLength="28.3" lengthAdjust="spacingAndGlyphs">R12</text>
<text x="710.7" y="391.0" class="l" textLength="64.2" lengthAdjust="spacingAndGlyphs">{Routput}</text>
<rect x="862" y="360" width="1" height="16" fill="#ff0000"/>
<rect x="862" y="405" width="1" height="16" fill="#ff0000"/>
<rect x="856" y="375" width="13" height="1" fill="#ff0000"/>
<rect x="856" y="405" width="13" height="1" fill="#ff0000"/>
<rect x="856" y="375" width="1" height="31" fill="#ff0000"/>
<rect x="868" y="375" width="1" height="31" fill="#ff0000"/>
<text x="872.2" y="374.0" class="l" textLength="28.3" lengthAdjust="spacingAndGlyphs">R13</text>
<text x="872.2" y="391.0" class="l" textLength="64.2" lengthAdjust="spacingAndGlyphs">{Routput}</text>
<rect x="378" y="683" width="1" height="16" fill="#ff0000"/>
<rect x="378" y="728" width="1" height="16" fill="#ff0000"/>
<rect x="372" y="698" width="13" height="1" fill="#ff0000"/>
<rect x="372" y="728" width="13" height="1" fill="#ff0000"/>
<rect x="372" y="698" width="1" height="31" fill="#ff0000"/>
<rect x="384" y="698" width="1" height="31" fill="#ff0000"/>
<text x="387.7" y="697.0" class="l" textLength="19.7" lengthAdjust="spacingAndGlyphs">R3</text>
<text x="387.7" y="714.0" class="l" textLength="41.1" lengthAdjust="spacingAndGlyphs">{Rtail}</text>
<rect x="539" y="683" width="1" height="16" fill="#ff0000"/>
<rect x="539" y="728" width="1" height="16" fill="#ff0000"/>
<rect x="533" y="698" width="13" height="1" fill="#ff0000"/>
<rect x="533" y="728" width="13" height="1" fill="#ff0000"/>
<rect x="533" y="698" width="1" height="31" fill="#ff0000"/>
<rect x="545" y="698" width="1" height="31" fill="#ff0000"/>
<text x="549.2" y="697.0" class="l" textLength="19.7" lengthAdjust="spacingAndGlyphs">R6</text>
<text x="549.2" y="714.0" class="l" textLength="41.1" lengthAdjust="spacingAndGlyphs">{Rtail}</text>
<rect x="297" y="743" width="1" height="17" fill="#ff0000"/>
<rect x="297" y="789" width="1" height="16" fill="#ff0000"/>
<rect x="291" y="759" width="13" height="1" fill="#ff0000"/>
<rect x="291" y="789" width="13" height="1" fill="#ff0000"/>
<rect x="291" y="759" width="1" height="31" fill="#ff0000"/>
<rect x="303" y="759" width="1" height="31" fill="#ff0000"/>
<text x="306.9" y="757.0" class="l" textLength="19.7" lengthAdjust="spacingAndGlyphs">R8</text>
<text x="306.9" y="775.0" class="l" textLength="24.8" lengthAdjust="spacingAndGlyphs">50k</text>
<rect x="297" y="885" width="1" height="16" fill="#ff0000"/>
<rect x="297" y="930" width="1" height="16" fill="#ff0000"/>
<rect x="291" y="900" width="13" height="1" fill="#ff0000"/>
<rect x="291" y="930" width="13" height="1" fill="#ff0000"/>
<rect x="291" y="900" width="1" height="31" fill="#ff0000"/>
<rect x="303" y="900" width="1" height="31" fill="#ff0000"/>
<text x="306.9" y="899.0" class="l" textLength="19.7" lengthAdjust="spacingAndGlyphs">R2</text>
<text x="306.9" y="916.0" class="l" textLength="16.3" lengthAdjust="spacingAndGlyphs">5k</text>
<rect x="378" y="885" width="1" height="16" fill="#ff0000"/>
<rect x="378" y="930" width="1" height="16" fill="#ff0000"/>
<rect x="372" y="900" width="13" height="1" fill="#ff0000"/>
<rect x="372" y="930" width="13" height="1" fill="#ff0000"/>
<rect x="372" y="900" width="1" height="31" fill="#ff0000"/>
<rect x="384" y="900" width="1" height="31" fill="#ff0000"/>
<text x="387.7" y="899.0" class="l" textLength="19.7" lengthAdjust="spacingAndGlyphs">R7</text>
<text x="387.7" y="916.0" class="l" textLength="47.9" lengthAdjust="spacingAndGlyphs">{Rcurr}</text>
<rect x="701" y="865" width="1" height="16" fill="#ff0000"/>
<rect x="701" y="910" width="1" height="16" fill="#ff0000"/>
<rect x="695" y="880" width="13" height="1" fill="#ff0000"/>
<rect x="695" y="910" width="13" height="1" fill="#ff0000"/>
<rect x="695" y="880" width="1" height="31" fill="#ff0000"/>
<rect x="707" y="880" width="1" height="31" fill="#ff0000"/>
<text x="710.7" y="878.0" class="l" textLength="27.1" lengthAdjust="spacingAndGlyphs">R11</text>
<text x="710.7" y="896.0" class="l" textLength="25.7" lengthAdjust="spacingAndGlyphs">100</text>
<rect x="862" y="865" width="1" height="16" fill="#ff0000"/>
<rect x="862" y="910" width="1" height="16" fill="#ff0000"/>
<rect x="856" y="880" width="13" height="1" fill="#ff0000"/>
<rect x="856" y="910" width="13" height="1" fill="#ff0000"/>
<rect x="856" y="880" width="1" height="31" fill="#ff0000"/>
<rect x="868" y="880" width="1" height="31" fill="#ff0000"/>
<text x="872.2" y="878.0" class="l" textLength="28.3" lengthAdjust="spacingAndGlyphs">R14</text>
<text x="872.2" y="896.0" class="l" textLength="25.7" lengthAdjust="spacingAndGlyphs">100</text>
<rect x="923" y="663" width="1" height="16" fill="#ff0000"/>
<rect x="923" y="708" width="1" height="16" fill="#ff0000"/>
<rect x="917" y="678" width="13" height="1" fill="#ff0000"/>
<rect x="917" y="708" width="13" height="1" fill="#ff0000"/>
<rect x="917" y="678" width="1" height="31" fill="#ff0000"/>
<rect x="929" y="678" width="1" height="31" fill="#ff0000"/>
<text x="932.8" y="677.0" class="l" textLength="28.3" lengthAdjust="spacingAndGlyphs">R10</text>
<text x="932.8" y="694.0" class="l" textLength="24.8" lengthAdjust="spacingAndGlyphs">10k</text>
<rect x="236" y="441" width="17" height="1" fill="#ff0000"/>
<rect x="282" y="441" width="16" height="1" fill="#ff0000"/>
<rect x="252" y="435" width="1" height="13" fill="#ff0000"/>
<rect x="282" y="435" width="1" height="13" fill="#ff0000"/>
<rect x="252" y="435" width="31" height="1" fill="#ff0000"/>
<rect x="252" y="447" width="31" height="1" fill="#ff0000"/>
<text x="267.5" y="431.0" class="l" text-anchor="middle" textLength="18.8" lengthAdjust="spacingAndGlyphs">1K</text>
<text x="267.5" y="466.0" class="l" text-anchor="middle" textLength="19.7" lengthAdjust="spacingAndGlyphs">R9</text>
<rect x="236" y="602" width="17" height="1" fill="#ff0000"/>
<rect x="282" y="602" width="16" height="1" fill="#ff0000"/>
<rect x="252" y="596" width="1" height="13" fill="#ff0000"/>
<rect x="282" y="596" width="1" height="13" fill="#ff0000"/>
<rect x="252" y="596" width="31" height="1" fill="#ff0000"/>
<rect x="252" y="608" width="31" height="1" fill="#ff0000"/>
<text x="267.5" y="592.0" class="l" text-anchor="middle" textLength="18.8" lengthAdjust="spacingAndGlyphs">1K</text>
<text x="267.5" y="627.0" class="l" text-anchor="middle" textLength="19.7" lengthAdjust="spacingAndGlyphs">R1</text>
<rect x="176" y="320" width="1" height="21" fill="#ff0000"/>
<rect x="176" y="380" width="1" height="21" fill="#ff0000"/>
<circle cx="176.5" cy="360.5" r="20" fill="none" stroke="#ff0000" stroke-width="1"/>
<rect x="172" y="350" width="9" height="1" fill="#ff0000"/>
<rect x="176" y="346" width="1" height="9" fill="#ff0000"/>
<text x="199.7" y="333.0" class="l" textLength="18.8" lengthAdjust="spacingAndGlyphs">V3</text>
<text x="199.7" y="351.0" class="l" textLength="17.1" lengthAdjust="spacingAndGlyphs">15</text>
<rect x="135" y="501" width="1" height="22" fill="#ff0000"/>
<rect x="135" y="562" width="1" height="21" fill="#ff0000"/>
<circle cx="135.5" cy="542.5" r="20" fill="none" stroke="#ff0000" stroke-width="1"/>
<rect x="131" y="532" width="9" height="1" fill="#ff0000"/>
<rect x="135" y="528" width="1" height="9" fill="#ff0000"/>
<text x="159.4" y="515.0" class="l" textLength="18.8" lengthAdjust="spacingAndGlyphs">V1</text>
<text x="159.4" y="532.0" class="l" textLength="210.6" lengthAdjust="spacingAndGlyphs">0 AC 1 0 Sin(0 500m 500k 0 0)</text>
<rect x="196" y="865" width="1" height="21" fill="#ff0000"/>
<rect x="196" y="925" width="1" height="21" fill="#ff0000"/>
<circle cx="196.5" cy="905.5" r="20" fill="none" stroke="#ff0000" stroke-width="1"/>
<rect x="192" y="895" width="9" height="1" fill="#ff0000"/>
<rect x="196" y="891" width="1" height="9" fill="#ff0000"/>
<text x="219.9" y="878.0" class="l" textLength="18.8" lengthAdjust="spacingAndGlyphs">V2</text>
<text x="219.9" y="896.0" class="l" textLength="17.1" lengthAdjust="spacingAndGlyphs">15</text>
<rect x="135" y="683" width="1" height="21" fill="#ff0000"/>
<rect x="115" y="703" width="42" height="1" fill="#ff0000"/>
<rect x="123" y="709" width="26" height="1" fill="#ff0000"/>
<rect x="131" y="715" width="9" height="1" fill="#ff0000"/>
<rect x="923" y="743" width="1" height="22" fill="#ff0000"/>
<rect x="903" y="764" width="41" height="1" fill="#ff0000"/>
<rect x="911" y="770" width="26" height="1" fill="#ff0000"/>
<rect x="919" y="776" width="9" height="1" fill="#ff0000"/>
<rect x="358" y="582" width="5" height="41" fill="#ff0000"/>
<rect x="337" y="602" width="22" height="1" fill="#ff0000"/>
<line x1="363.5" y1="596.5" x2="378.5" y2="582.5" stroke="#ff0000" stroke-width="1" stroke-linecap="square"/>
<line x1="363.5" y1="608.5" x2="378.5" y2="622.5" stroke="#ff0000" stroke-width="1" stroke-linecap="square"/>
<polygon points="379.5,623.4 368.1,619.2 374.5,612.3" fill="#ff0000"/>
<text x="381.8" y="596.0" class="l" textLength="20.5" lengthAdjust="spacingAndGlyphs">Q2</text>
<text x="381.8" y="613.0" class="l" textLength="19.7" lengthAdjust="spacingAndGlyphs">N1</text>
<rect x="358" y="804" width="5" height="41" fill="#ff0000"/>
<rect x="337" y="824" width="22" height="1" fill="#ff0000"/>
<line x1="363.5" y1="818.5" x2="378.5" y2="804.5" stroke="#ff0000" stroke-width="1" stroke-linecap="square"/>
<line x1="363.5" y1="830.5" x2="378.5" y2="844.5" stroke="#ff0000" stroke-width="1" stroke-linecap="square"/>
<polygon points="379.5,845.4 368.1,841.2 374.5,834.3" fill="#ff0000"/>
<text x="381.8" y="818.0" class="l" textLength="20.5" lengthAdjust="spacingAndGlyphs">Q1</text>
<text x="381.8" y="835.0" class="l" textLength="19.7" lengthAdjust="spacingAndGlyphs">N1</text>
<rect x="681" y="784" width="5" height="41" fill="#ff0000"/>
<rect x="660" y="804" width="22" height="1" fill="#ff0000"/>
<line x1="686.5" y1="798.5" x2="701.5" y2="784.5" stroke="#ff0000" stroke-width="1" stroke-linecap="square"/>
<line x1="686.5" y1="810.5" x2="701.5" y2="824.5" stroke="#ff0000" stroke-width="1" stroke-linecap="square"/>
<polygon points="702.5,825.4 691.1,821.2 697.5,814.3" fill="#ff0000"/>
<text x="704.9" y="798.0" class="l" textLength="20.5" lengthAdjust="spacingAndGlyphs">Q7</text>
<text x="704.9" y="815.0" class="l" textLength="19.7" lengthAdjust="spacingAndGlyphs">N1</text>
<rect x="842" y="784" width="5" height="41" fill="#ff0000"/>
<rect x="822" y="804" width="21" height="1" fill="#ff0000"/>
<line x1="847.5" y1="798.5" x2="862.5" y2="784.5" stroke="#ff0000" stroke-width="1" stroke-linecap="square"/>
<line x1="847.5" y1="810.5" x2="862.5" y2="824.5" stroke="#ff0000" stroke-width="1" stroke-linecap="square"/>
<polygon points="863.5,825.4 852.1,821.2 858.5,814.3" fill="#ff0000"/>
<text x="866.4" y="798.0" class="l" textLength="20.5" lengthAdjust="spacingAndGlyphs">Q4</text>
<text x="866.4" y="815.0" class="l" textLength="19.7" lengthAdjust="spacingAndGlyphs">N1</text>
<rect x="555" y="582" width="5" height="41" fill="#ff0000"/>
<rect x="559" y="602" width="22" height="1" fill="#ff0000"/>
<line x1="554.5" y1="596.5" x2="539.5" y2="582.5" stroke="#ff0000" stroke-width="1" stroke-linecap="square"/>
<line x1="554.5" y1="608.5" x2="539.5" y2="622.5" stroke="#ff0000" stroke-width="1" stroke-linecap="square"/>
<polygon points="538.5,623.4 543.5,612.3 549.9,619.2" fill="#ff0000"/>
<text x="535.2" y="596.0" class="l" text-anchor="end" textLength="20.5" lengthAdjust="spacingAndGlyphs">Q3</text>
<text x="535.2" y="613.0" class="l" text-anchor="end" textLength="19.7" lengthAdjust="spacingAndGlyphs">N1</text>
<rect x="681" y="542" width="5" height="41" fill="#ff0000"/>
<rect x="660" y="562" width="22" height="1" fill="#ff0000"/>
<line x1="686.5" y1="556.5" x2="701.5" y2="542.5" stroke="#ff0000" stroke-width="1" stroke-linecap="square"/>
<line x1="686.5" y1="568.5" x2="701.5" y2="582.5" stroke="#ff0000" stroke-width="1" stroke-linecap="square"/>
<polygon points="684.9,558.0 689.9,546.9 696.3,553.8" fill="#ff0000"/>
<text x="704.9" y="555.0" class="l" textLength="20.5" lengthAdjust="spacingAndGlyphs">Q5</text>
<text x="704.9" y="573.0" class="l" textLength="18.8" lengthAdjust="spacingAndGlyphs">P1</text>
<rect x="878" y="542" width="5" height="41" fill="#ff0000"/>
<rect x="882" y="562" width="22" height="1" fill="#ff0000"/>
<line x1="877.5" y1="556.5" x2="862.5" y2="542.5" stroke="#ff0000" stroke-width="1" stroke-linecap="square"/>
<line x1="877.5" y1="568.5" x2="862.5" y2="582.5" stroke="#ff0000" stroke-width="1" stroke-linecap="square"/>
<polygon points="879.1,558.0 867.7,553.8 874.1,546.9" fill="#ff0000"/>
<text x="858.2" y="555.0" class="l" text-anchor="end" textLength="20.5" lengthAdjust="spacingAndGlyphs">Q6</text>
<text x="858.2" y="573.0" class="l" text-anchor="end" textLength="18.8" lengthAdjust="spacingAndGlyphs">P1</text>
<rect x="963" y="643" width="21" height="1" fill="#ff0000"/>
<rect x="983" y="632" width="22" height="1" fill="#ff0000"/>
<rect x="983" y="653" width="22" height="1" fill="#ff0000"/>
<rect x="983" y="632" width="1" height="22" fill="#ff0000"/>
<rect x="1004" y="632" width="1" height="22" fill="#ff0000"/>
<text x="1007.7" y="646.0" class="l" textLength="42.8" lengthAdjust="spacingAndGlyphs">VOUT</text>
<text x="1024.5" y="317.6" style="font-size:21.01px" textLength="119.5" lengthAdjust="spacingAndGlyphs">Specification:</text>
<text x="1024.5" y="340.8" style="font-size:21.01px" textLength="175.5" lengthAdjust="spacingAndGlyphs">Bandwidth: 250Mhz</text>
<text x="1024.5" y="364.0" style="font-size:21.01px" textLength="174.9" lengthAdjust="spacingAndGlyphs">Gain: 20db at 1Mhz</text>
<text x="1024.5" y="387.2" style="font-size:21.01px" textLength="336.1" lengthAdjust="spacingAndGlyphs">Distortion: &lt;1%, 500mV, 500khz input</text>
<text x="1024.5" y="433.6" style="font-size:21.01px" textLength="365.9" lengthAdjust="spacingAndGlyphs">Minimise PSU current consumption while</text>
<text x="1024.5" y="456.8" style="font-size:21.01px" textLength="365.9" lengthAdjust="spacingAndGlyphs">maintaining above minimum specification</text>
<text x="1024.5" y="503.2" style="font-size:21.01px" textLength="151.0" lengthAdjust="spacingAndGlyphs">Vary parameters:</text>
<text x="1024.5" y="526.4" style="font-size:21.01px" textLength="316.7" lengthAdjust="spacingAndGlyphs">Rcoll: input stage collector resistors</text>
<text x="1024.5" y="549.6" style="font-size:21.01px" textLength="263.5" lengthAdjust="spacingAndGlyphs">Rtail: Input stage tail resistors</text>
<text x="1024.5" y="572.8" style="font-size:21.01px" textLength="365.2" lengthAdjust="spacingAndGlyphs">Rcurr: input stage current source resistor</text>
<text x="1024.5" y="596.0" style="font-size:21.01px" textLength="340.6" lengthAdjust="spacingAndGlyphs">Routput: output stage emitter resistors</text>
</svg>
<div id="inner"></div><div id="innr"></div><div id="innr2"></div><div style="position:absolute;left:2px;top:1148px;width:1537px;height:1px;background:#fafafa"></div><div style="position:absolute;left:1538px;top:1092px;width:1px;height:57px;background:#fafafa"></div><div id="frame"></div>
</body></html>
